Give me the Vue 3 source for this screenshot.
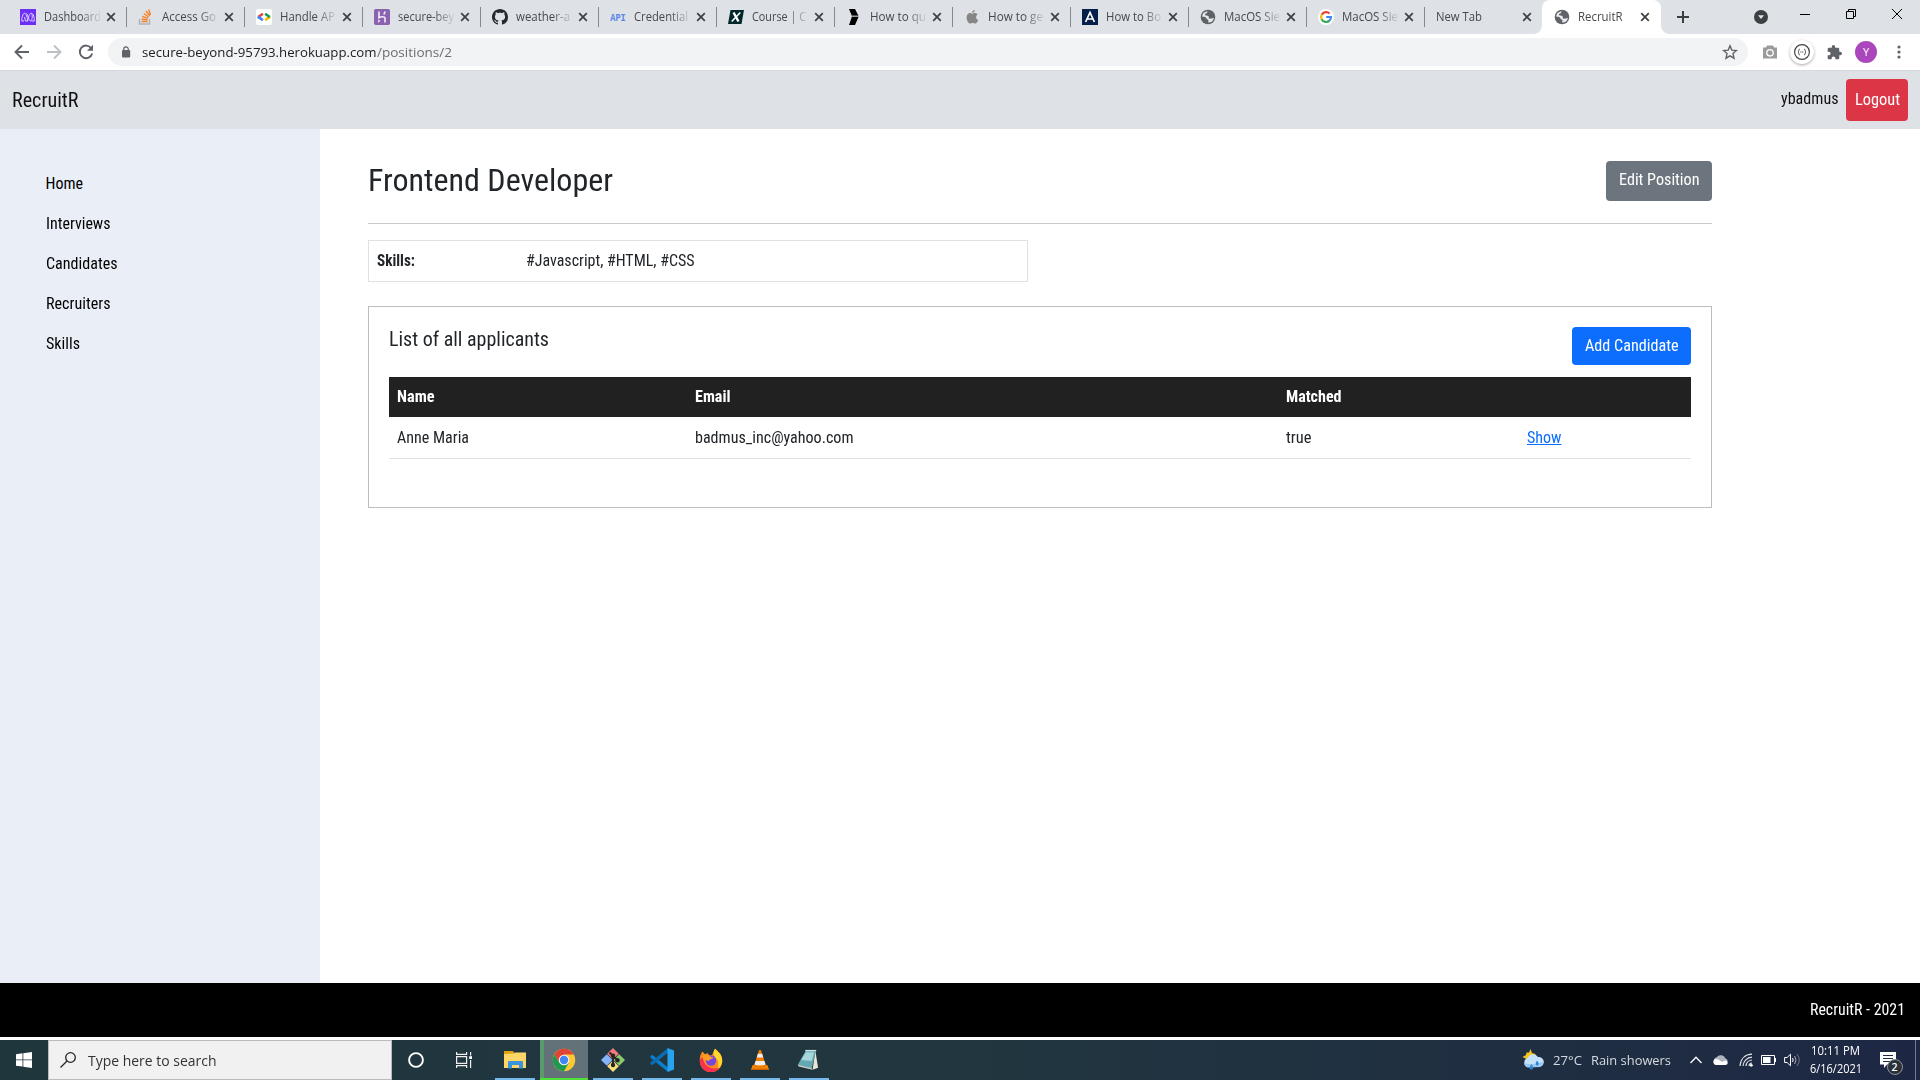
<script setup>
// Stretches or condenses a text run to a given advance width.
const vFit = {
  mounted(el, { value }) {
    const natural = el.getBoundingClientRect().width
    if (!natural) return
    el.style.transform = `scaleX(${value / natural})`
    el.style.marginRight = `${value - natural}px`
  },
}

const tabs = [
  { icon: 'amplify', title: 'Dashboard', width: 57 },
  { icon: 'stack', title: 'Access Go', width: 54 },
  { icon: 'google-dev', title: 'Handle AP', width: 55 },
  { icon: 'heroku', title: 'secure-bey', width: 56 },
  { icon: 'github', title: 'weather-a', width: 54 },
  { icon: 'api', title: 'Credential', width: 54 },
  { icon: 'course', title: 'Course | C', width: 54 },
  { icon: 'arrow', title: 'How to qu', width: 56 },
  { icon: 'apple', title: 'How to ge', width: 55 },
  { icon: 'letter', title: 'How to Bo', width: 55 },
  { icon: 'globe', title: 'MacOS Sie', width: 56 },
  { icon: 'google', title: 'MacOS Sie', width: 56 },
  { icon: null, title: 'New Tab', width: 46 },
  { icon: 'globe', title: 'RecruitR', width: 44.5, active: true },
]

const links = [
  { label: 'Home', width: 37.5 },
  { label: 'Interviews', width: 64.5 },
  { label: 'Candidates', width: 71.5 },
  { label: 'Recruiters', width: 64.5 },
  { label: 'Skills', width: 34 },
]

const apps = ['explorer', 'chrome', 'git', 'vscode', 'firefox', 'vlc', 'notepad']
</script>

<template>
  <div class="screen">
    <div class="tabstrip">
      <div v-for="(tab, i) in tabs" :key="i" class="tab" :class="{ active: tab.active, 'no-sep': i >= 12 }">
        <svg v-if="tab.icon" class="favicon" viewBox="0 0 16 16">
          <g v-if="tab.icon === 'amplify'">
            <path fill="#6b2ff5" d="M0 0h16v16H0z" />
            <path fill="none" stroke="#ded2ff" stroke-width="1" d="M4 12H1.800C1.500 9 3 4.200 4.500 4.200S7.500 9 7.800 12H5.500L4.500 8M6.300 4.200C8 4.500 8.500 12 10.500 12S13 4.200 11 4.200 8 12 6.800 12M11.500 4.200C13.500 4.500 14.500 9 14.300 12H11.500" />
          </g>
          <g v-else-if="tab.icon === 'stack'" fill="none">
            <path stroke="#b0b4b8" stroke-width="1.500" d="M1.500 10v5h10v-5" />
            <path stroke="#f48024" stroke-width="1.400" d="M3.500 12.500h6M3.600 10l6 .9M4.300 7.300l5.700 2M5.800 4.500l4.900 3.500M8 2l3.900 4.700M10.800.5l1.700 5.500" />
          </g>
          <g v-else-if="tab.icon === 'google-dev'">
            <rect width="16" height="16" rx="2" fill="#fff" />
            <path fill="none" stroke="#ea4335" stroke-width="2.600" d="M6.900 4.800L2.300 8" />
            <path fill="none" stroke="#4285f4" stroke-width="2.600" d="M1.700 7.600l5.200 3.500" />
            <path fill="none" stroke="#fbbc05" stroke-width="2.600" d="M14.300 7.600l-5.200 3.500" />
            <path fill="none" stroke="#0f9d58" stroke-width="2.600" d="M9.100 4.800L13.700 8" />
          </g>
          <g v-else-if="tab.icon === 'heroku'">
            <rect width="16" height="16" rx="1.800" fill="#8a63b0" />
            <path fill="none" stroke="#f3ecfa" stroke-width="1.600" d="M5 2.500v6.300c2-1 6-1.800 6 .6v4.100M11 2.500c0 1.200-.6 2-1.300 2.900" />
            <path fill="#f3ecfa" d="M4.200 10.300l2.200 1.700-2.200 1.700z" />
          </g>
          <path v-else-if="tab.icon === 'github'" fill="#24292e" d="M8 0C3.580 0 0 3.580 0 8c0 3.540 2.290 6.530 5.470 7.590.4.070.55-.17.55-.38 0-.19-.01-.82-.01-1.490-2.010.37-2.530-.49-2.690-.94-.09-.23-.48-.94-.82-1.130-.28-.15-.68-.52-.01-.53.63-.01 1.080.58 1.230.82.72 1.210 1.870.87 2.330.66.07-.52.28-.87.51-1.070-1.780-.2-3.640-.89-3.640-3.950 0-.87.31-1.590.82-2.150-.08-.2-.36-1.020.08-2.120 0 0 .67-.21 2.200.82.64-.18 1.320-.27 2-.27s1.360.09 2 .27c1.530-1.040 2.200-.82 2.200-.82.44 1.100.16 1.920.08 2.120.51.56.82 1.270.82 2.150 0 3.070-1.870 3.750-3.650 3.950.29.25.54.73.54 1.480 0 1.070-.01 1.930-.01 2.200 0 .21.15.46.55.38A8.010 8.010 0 0016 8c0-4.420-3.580-8-8-8z" />
          <text v-else-if="tab.icon === 'api'" x=".2" y="11.800" textLength="15.600" lengthAdjust="spacingAndGlyphs" font-family="'Liberation Mono', monospace" font-weight="700" font-size="11" fill="#5b87e8">API</text>
          <g v-else-if="tab.icon === 'course'">
            <path fill="#02262c" d="M2.500 1H16l-2.500 14H0z" />
            <path fill="none" stroke="#fff" stroke-width="2.400" d="M5.500 3.500l5 9" />
            <path fill="none" stroke="#fff" stroke-width="1.600" d="M12.300 3.500l-8.600 9" />
          </g>
          <g v-else-if="tab.icon === 'arrow'">
            <path fill="#000" d="M3 0h6l3.500 6.700H5.800zM5.800 8h6.700L9 16H3z" />
            <path fill="#999" d="M5.300 6.700h7.200V8H5.800z" />
          </g>
          <path v-else-if="tab.icon === 'apple'" fill="#868686" d="M10.800 1c.1 1.500-1.200 3-2.700 3C8 2.500 9.300 1.200 10.800 1zM8.300 4.800c.6 0 1.300-.8 2.600-.8 1.200 0 2.200.6 2.800 1.500-2.300 1.300-2 4.600.5 5.500-.6 1.700-1.800 3.600-3 3.600-.9 0-1.300-.6-2.500-.6s-1.600.6-2.500.6C4.500 14.600 2.600 11.500 2.600 8.500 2.600 5.500 4.400 4 6 4c1 0 1.700.8 2.300.8z" />
          <g v-else-if="tab.icon === 'letter'">
            <path fill="#04204a" d="M0 0h16v16H0z" />
            <path fill="none" stroke="#fff" stroke-width="1.700" d="M3.600 13L8 3.500l4.400 9.500M5 10h6" />
          </g>
          <g v-else-if="tab.icon === 'globe'">
            <circle cx="8" cy="8" r="7.300" fill="#5f6368" />
            <path fill="#e8eaed" d="M8.500 2.500c-2 .2-1 1.800-2.600 2.100-1.700.2-1 2 .4 1.900 1.900 0 2.700.9 2.500 2.300 0 1.500 1.700.9 2.700.8.9 0 1.500-.7 2.400-.7-.5 2.900-3 4.900-5.600 4.700-.2-1.300.5-1.700 0-2.700-.5-.8-2-.4-2-1.800 0-1.300-2-1.300-3.900-1.400-.3-3 2-5.600 6.100-5.200z" />
          </g>
          <g v-else-if="tab.icon === 'google'">
            <circle cx="8" cy="8" r="8" fill="#fff" />
            <g fill="none" stroke-width="2.200">
              <path stroke="#ea4335" d="M3.700 5.700A5 5 0 0111.600 4.500" />
              <path stroke="#fbbc05" d="M3.700 5.600a5 5 0 000 4.800" />
              <path stroke="#34a853" d="M3.600 10.300a5 5 0 007.900 1.300" />
              <path stroke="#4285f4" d="M8.200 8H13a5 5 0 01-1.600 3.700" />
            </g>
          </g>
        </svg>
        <div class="tab-title"><span v-fit="tab.width" class="fit">{{ tab.title }}</span></div>
        <svg class="tab-close" viewBox="0 0 10 10"><path d="M1.200 1.200l7.600 7.600M8.800 1.200L1.200 8.800" /></svg>
      </div>
      <svg class="new-tab" viewBox="0 0 12 12"><path d="M6 0v12M0 6h12" stroke="#3c4043" stroke-width="2" /></svg>
      <svg class="tab-search" viewBox="0 0 14 14"><circle cx="7" cy="7" r="7" fill="#3c4043" /><path fill="#dee1e6" d="M4 5.300h6L7 9z" /></svg>
      <svg class="win win-min" viewBox="0 0 10 10"><path d="M0 5.500h10" /></svg>
      <svg class="win" viewBox="0 0 10 10"><path d="M.5 2.500h7v7h-7zM2.500 2.500v-2h7v7h-2" /></svg>
      <svg class="win" viewBox="0 0 10 10"><path d="M0 0l10 10M10 0L0 10" /></svg>
    </div>

    <div class="toolbar">
      <svg class="nav" viewBox="0 0 16 16"><path d="M15 8H2M8 1.500L1.500 8 8 14.500" stroke="#5f6368" /></svg>
      <svg class="nav" viewBox="0 0 16 16"><path d="M1 8h13M8 1.500L14.500 8 8 14.500" stroke="#bdc1c6" /></svg>
      <svg class="nav" viewBox="0 0 16 16"><path d="M13.300 4.300A6.300 6.300 0 1014.200 9.500" stroke="#5f6368" /><path d="M15 .8v6H9z" fill="#5f6368" stroke="none" /></svg>
      <div class="omnibox">
        <svg class="lock" viewBox="0 0 10 12"><rect x="1" y="4" width="8.200" height="7.500" rx="1" fill="#5f6368" /><path d="M2.800 5V3.200a2.250 2.250 0 014.500 0V5" fill="none" stroke="#5f6368" stroke-width="1.200" /></svg>
        <div class="url"><span v-fit="234.500" class="fit host">secure-beyond-95793.herokuapp.com</span><span v-fit="75" class="fit path">/positions/2</span></div>
        <svg class="star" viewBox="0 0 16 16"><path fill="none" stroke="#5f6368" stroke-width="1.400" d="M8 1.800l1.800 4.300 4.700.4-3.500 3.100 1 4.600L8 11.800l-4 2.400 1-4.600-3.500-3.100 4.700-.4z" /></svg>
      </div>
      <svg class="ext camera" viewBox="0 0 16 14"><path fill="#9b9b9b" d="M5 .5h6l1 2h3v11H1v-11h3z" /><circle cx="8" cy="7.800" r="3.200" fill="none" stroke="#fff" stroke-width="1.300" /></svg>
      <div class="json"><svg viewBox="0 0 16 16"><g fill="none" stroke="#444"><circle cx="8" cy="8" r="7.400" stroke-width="1.200" /><path d="M5.800 5C4.500 5 5.200 7.500 4 8c1.200.5.5 3 1.800 3M10.200 5c1.300 0 .6 2.500 1.800 3-1.200.5-.5 3-1.800 3" /><path stroke-dasharray="1 .6" d="M6.300 8h3.500" /></g></svg></div>
      <svg class="ext puzzle" viewBox="1 1 22 22"><path fill="#5f6368" d="M20.500 11H19V7c0-1.100-.9-2-2-2h-4V3.500a2.500 2.500 0 00-5 0V5H4c-1.100 0-2 .9-2 2v3.800h1.500c1.500 0 2.700 1.200 2.700 2.700S5 16.200 3.500 16.200H2V20c0 1.100.9 2 2 2h3.800v-1.500c0-1.500 1.200-2.700 2.700-2.700s2.700 1.200 2.700 2.700V22H17c1.100 0 2-.9 2-2v-4h1.500a2.500 2.500 0 000-5z" /></svg>
      <div class="avatar">Y</div>
      <svg class="dots" viewBox="0 0 4 14"><g fill="#5f6368"><circle cx="2" cy="2" r="1.600" /><circle cx="2" cy="7" r="1.600" /><circle cx="2" cy="12" r="1.600" /></g></svg>
    </div>

    <header class="navbar">
      <div class="brand"><span v-fit="66.500" class="fit">RecruitR</span></div>
      <div class="user"><span v-fit="57.500" class="fit">ybadmus</span></div>
      <div class="btn logout"><span v-fit="45" class="fit">Logout</span></div>
    </header>

    <div class="body">
      <nav class="sidebar">
        <div v-for="link in links" :key="link.label" class="side-link"><span v-fit="link.width" class="fit">{{ link.label }}</span></div>
      </nav>
      <main class="content">
        <div class="title-row">
          <h1><span v-fit="245" class="fit">Frontend Developer</span></h1>
          <div class="btn edit"><span v-fit="80.500" class="fit">Edit Position</span></div>
        </div>
        <div class="skills">
          <div class="skills-label"><span v-fit="38" class="fit">Skills:</span></div>
          <div><span v-fit="168.500" class="fit">#Javascript, #HTML, #CSS</span></div>
        </div>
        <section class="card">
          <div class="card-head">
            <h2><span v-fit="160" class="fit">List of all applicants</span></h2>
            <div class="btn add"><span v-fit="93.500" class="fit">Add Candidate</span></div>
          </div>
          <div class="row head">
            <div><span v-fit="37.500" class="fit">Name</span></div>
            <div><span v-fit="35.500" class="fit">Email</span></div>
            <div><span v-fit="55.500" class="fit">Matched</span></div>
            <div></div>
          </div>
          <div class="row">
            <div><span v-fit="72" class="fit">Anne Maria</span></div>
            <div><span v-fit="158.500" class="fit">badmus_inc@yahoo.com</span></div>
            <div><span v-fit="25.500" class="fit">true</span></div>
            <div><span v-fit="34.500" class="fit show">Show</span></div>
          </div>
        </section>
      </main>
    </div>

    <footer class="footer"><span v-fit="95" class="fit">RecruitR - 2021</span></footer>

    <div class="taskbar">
      <div class="start"><svg viewBox="0 0 16 16"><path fill="#fff" d="M0 2.200l6.500-.9v6.200H0zM7.300 1.200L16 0v7.500H7.300zM0 8.300h6.500v6.300L0 13.700zM7.300 8.300H16V16l-8.700-1.200z" /></svg></div>
      <div class="search">
        <svg viewBox="0 0 16 16"><circle cx="10.500" cy="5.500" r="4.800" fill="none" stroke="#222" stroke-width="1.300" /><path d="M7 9L.5 15.500" stroke="#222" stroke-width="1.300" /></svg>
        <span v-fit="128.500" class="fit">Type here to search</span>
      </div>
      <div class="sys"><svg viewBox="0 0 16 16"><circle cx="8" cy="8" r="6.900" fill="none" stroke="#fff" stroke-width="1.900" /></svg></div>
      <div class="sys"><svg viewBox="0 0 16 16"><path fill="none" stroke="#f0f0f0" stroke-width="1.200" d="M.6 0v2.400h10V0M.6 16v-2.400h10V16M.6 4.600h10v6.800H.6zM14.600 0v3.500M14.600 8v8" /><path fill="#fff" d="M13.200 4.200H16V7h-2.800z" /></svg></div>
      <div class="apps">
        <div v-for="app in apps" :key="app" class="app" :class="app">
          <svg viewBox="0 0 24 24">
            <g v-if="app === 'explorer'">
              <path fill="#e0a010" d="M1 3h9l1.500 2v4H1z" /><path fill="#fdd667" d="M1 6l10-.5L12 4.500h11V20H1z" />
              <path fill="#3a93dc" d="M5 20.500V14q0-1 1-1h13q1 0 1 1v6.500h-4V17H9v3.500z" />
            </g>
            <g v-else-if="app === 'chrome'">
              <circle cx="12" cy="12" r="11.200" fill="#fbc934" />
              <path fill="#e04436" d="M2.300 6.400A11.200 11.200 0 0121.700 6.400H12L7.200 14.800z" />
              <path fill="#1d9a50" d="M2.300 6.400A11.200 11.200 0 0012 23.200l4.800-8.400H7.200z" />
              <circle cx="12" cy="12" r="5.300" fill="#f4f4f4" /><circle cx="12" cy="12" r="4.200" fill="#4285f4" />
            </g>
            <g v-else-if="app === 'git'">
              <path fill="#f37a7a" d="M12 0l5.800 5.800L12 11.600 6.200 5.800z" /><path fill="#86b4f8" d="M5.800 6.200l5.800 5.800-5.800 5.800L0 12z" />
              <path fill="#8cc96a" d="M18.200 6.200L24 12l-5.800 5.800-5.800-5.800z" /><path fill="#fbe07a" d="M12 12.400l5.800 5.800L12 24l-5.800-5.800z" />
              <path fill="none" stroke="#252525" stroke-width="1.900" d="M8.500 4.500L12 8v9M12 8l4.500 4" /><g fill="#252525"><circle cx="12" cy="7.800" r="2.200" /><circle cx="12" cy="17" r="2.200" /><circle cx="16.500" cy="12.300" r="2.200" /></g>
            </g>
            <g v-else-if="app === 'vscode'">
              <path fill="#0a7fcf" d="M.5 8.300L2.300 6.700 18 19.500V24L.5 9.700z" /><path fill="#0b6cb5" d="M.5 15.700l1.800 1.600L18 4.500V0L.5 14.300z" />
              <path fill="#28a4ee" d="M17.500 0L24 2.600v18.800L17.500 24z" />
            </g>
            <g v-else-if="app === 'firefox'">
              <path fill="#ff8a1e" d="M3.500 3.500l2.500 2.700 2.500-1.200L10 7l3 0L16 .8C18 3 23.500 6 23.200 13A11.200 11.200 0 01.8 13C.6 9 1.500 6 3.500 3.500z" />
              <path fill="#ffd52e" d="M16 .8C18 3 23.500 6 23.200 13c0 3-2 7-5 8.500 2-5 1-9-1-11-3-3-3.500-6-1.200-9.700z" />
              <path fill="#f8314f" d="M.8 12c-.1 7 5 12.200 11.200 12.200 4 0 7-2 8.500-4.700C14 22 5 20 3.500 9z" /><circle cx="12" cy="12.500" r="5.200" fill="#7547db" />
              <path fill="#ff9d24" d="M3.500 8c3-2 5.500-1.500 8 .7l3 .8c-1 1.800-4.500 1.300-4.500 3.500-1 0-3-1.500-5.500-1z" />
            </g>
            <g v-else-if="app === 'vlc'">
              <path fill="#f28a0a" d="M4 17.500h16L22 23H2z" /><path fill="#ef7d00" d="M11 1h2l6 18.500q-7 2.500-14 0z" />
              <path fill="#eee" d="M9.700 5.200h4.600l1.300 4H8.400zM7.200 13h9.600l1.300 4q-6 2-12.200 0z" />
              <path fill="#c95d00" d="M2.500 21.500h19L22 23H2z" />
            </g>
            <g v-else>
              <path fill="#e9e4d8" d="M20 2l3 18.500-6 2z" /><path fill="#62a9b4" d="M9.500 2H20.500L16 21.500.8 17.500z" />
              <path fill="#a9d6dc" d="M9.800 3.500h9L16 13 4.500 12z" /><path stroke="#d6e4e6" stroke-width="1.400" d="M9 1.700h12" />
              <path fill="#d4d4cc" d="M.8 17.300L16 21l1 1.500L2 19z" />
            </g>
          </svg>
        </div>
      </div>
      <div class="tray">
        <svg class="weather" viewBox="0 0 22 22"><path fill="#f7c51e" d="M8.500 0l1.500 4 3.500 1-1 6-7 3-1-4L.5 8l3.500-2L4.500 3.500l2.500 0z" /><path fill="#c5e2fb" d="M6 18.500a5 5 0 01-.5-9.500A6 6 0 0116 8a5 5 0 011.500 10z" /><path fill="#9ac8f3" d="M5 18a5 5 0 01-3-4c5 2 13 1 19-1 0 3-1.500 4.500-4 5z" /><path fill="#2686dc" d="M9.500 15q-2.500 3.500-1.500 5 2 1.500 3-.5.500-2-1.500-4.500zM15 11.500q-2 3-1 4.500 1.500 1 2.500-.5.500-2-1.500-4z" /></svg>
        <span v-fit="29" class="fit temp">27°C</span>
        <span v-fit="80" class="fit rain">Rain showers</span>
        <svg class="chev" viewBox="0 0 12 8"><path fill="none" stroke="#fff" stroke-width="1.300" d="M.5 7L6 1.300 11.500 7" /></svg>
        <svg class="cloud" viewBox="0 0 16 12"><path fill="#aeb4bd" d="M2 8a4 4 0 013-5 5 5 0 018.500 1.500C16 5 16 8 15 9z" /><path fill="#fff" d="M3.500 11A3.300 3.300 0 013 5c2 0 4 .5 7 3l3-1.500c3 0 4 4.500 0 4.500z" /></svg>
        <svg class="wifi" viewBox="0 0 14 14"><g fill="none" stroke="#dfe3e8" stroke-width="1.200"><path d="M1 13C1.500 6 6 1.500 13 1.200M4 13c.3-5 4-8.500 9-8.800M7 13c.2-3 2.500-5.700 6-6M10 13q.2-2.800 3-3" /></g><circle cx="12.300" cy="12.300" r="1.400" fill="#fff" /></svg>
        <svg class="battery" viewBox="0 0 16 10"><path fill="none" stroke="#fff" d="M.5 .5h13v9H.5zM14.500 3v4" /><path fill="#fff" d="M2 2h7.500v6H2z" /></svg>
        <svg class="volume" viewBox="0 0 17 14"><path fill="none" stroke="#fff" d="M.6 4.500h2.500L6.500 1.200v11.600L3.100 9.500H.6z" /><path fill="none" stroke="#fff" d="M8.500 5q1.400 2 0 4" /><path fill="none" stroke="#aab0bd" d="M10.600 3q2.800 4 0 8" /><path fill="none" stroke="#6d7588" d="M13 1q4.500 6 0 12" /></svg>
        <div class="clock"><div><span v-fit="49" class="fit">10:11 PM</span></div><div><span v-fit="52" class="fit">6/16/2021</span></div></div>
        <div class="notice">
          <svg viewBox="0 0 16 16"><path fill="#fff" d="M0 0h16v12.500H7L4 16v-3.500H0z" /><path stroke="#1f2a44" stroke-width="1.200" d="M3 3.500h10M3 6.500h10M3 9.500h7" /></svg>
          <span class="badge">2</span>
        </div>
        <div class="desktop"></div>
      </div>
    </div>
  </div>
</template>

<style>
body { margin: 0; overflow: hidden; }
</style>

<style scoped>
.screen, .screen * { box-sizing: border-box; }
.screen { width: 1920px; height: 1080px; display: flex; flex-direction: column; background: #fff; font-family: "Roboto Condensed", Roboto, sans-serif; font-stretch: condensed; font-size: 16px; color: #212529; overflow: hidden; }
svg { display: block; flex: none; }
.fit { display: inline-block; flex: none; white-space: nowrap; transform-origin: 0 50%; }

.tabstrip, .toolbar, .taskbar { font-family: "Open Sans", "Noto Sans", sans-serif; font-stretch: normal; }
.tabstrip { height: 34px; flex: none; display: flex; align-items: center; background: #dee1e6; padding-left: 8px; }
.tab { position: relative; width: 118px; height: 34px; flex: none; display: flex; align-items: center; padding-left: 12px; }
.tab::after { content: ""; position: absolute; right: -1px; top: 7px; width: 1px; height: 20px; background: #85888d; }
.tab.no-sep::after { display: none; }
.favicon { width: 16px; height: 16px; margin-right: 7.5px; overflow: visible; }
.tab-title { width: 55px; flex: 1 1 0; height: 20px; line-height: 19px; overflow: hidden; white-space: nowrap; font-size: 12px; color: #45484c; -webkit-mask-image: linear-gradient(90deg, #000 36px, transparent 58px); mask-image: linear-gradient(90deg, #000 36px, transparent 58px); }
.no-sep .tab-title { -webkit-mask-image: none; mask-image: none; }
.tab-close { width: 10px; height: 10px; margin: 0 10px 0 6px; fill: none; stroke: #3c4043; stroke-width: 1.7; }
.tab.active { width: 119px; background: #fff; border-radius: 8px 8px 0 0; }
.tab.active .tab-close { margin-right: 11px; }
.tab.active::before { content: ""; position: absolute; left: -8px; bottom: 0; width: 8px; height: 8px; background: radial-gradient(circle at 0 0, transparent 7.5px, #fff 8px); }
.tab.active::after { display: block; right: -8px; top: auto; bottom: 0; width: 8px; height: 8px; background: radial-gradient(circle at 100% 0, transparent 7.5px, #fff 8px); }
.new-tab { width: 12px; height: 12px; margin-left: 16px; }
.tab-search { width: 14px; height: 14px; margin: 0 32px 0 65px; }
.win { width: 10px; height: 10px; margin: -6px 36px 0 0; fill: none; stroke: #000; stroke-width: 1; }
.win:last-child { margin-right: 0; }

.toolbar { height: 36px; flex: none; display: flex; align-items: center; background: #fff; padding-left: 14px; }
.nav { width: 16px; height: 16px; margin-right: 16px; fill: none; stroke-width: 1.9; }
.omnibox { width: 1640px; height: 28px; border-radius: 14px; background: #f1f3f4; display: flex; align-items: center; margin-left: -2px; padding-left: 13px; }
.lock { width: 10px; height: 12px; margin-right: 11px; }
.url { flex: 1; font-size: 13.5px; line-height: 26px; color: #202124; white-space: nowrap; display: flex; }
.path { color: #6a6e73; }
.star { width: 16px; height: 16px; margin-right: 10px; }
.camera { width: 16px; height: 14px; margin-left: 14px; }
.json { width: 24px; height: 24px; border-radius: 50%; background: #fff; box-shadow: 0 1px 3px rgba(0,0,0,.35); margin-left: 12px; padding: 4px; flex: none; }
.json svg { width: 16px; height: 16px; }
.puzzle { width: 15px; height: 15px; margin-left: 13px; }
.avatar { width: 22px; height: 22px; border-radius: 50%; background: #aa47bc; color: #fff; font-size: 11px; line-height: 22px; text-align: center; margin-left: 13px; flex: none; }
.dots { width: 4px; height: 14px; margin-left: 20px; }

.navbar { height: 59px; flex: none; background: #dee2e6; box-shadow: inset 0 1px #d6d9dc; display: flex; align-items: flex-start; padding: 9px 12px 0; color: #111; }
.brand { flex: 1; font-size: 20px; line-height: 42px; }
.user { line-height: 39px; margin-right: 8px; }
.btn { display: flex; justify-content: center; border-radius: 4px; color: #fff; flex: none; }
.logout { width: 62px; height: 42px; background: #dc3545; line-height: 42px; }

.body { height: 854px; flex: none; display: flex; }
.sidebar { width: 320px; background: #eaeff7; padding: 35px 0 0 45.5px; color: #000; }
.side-link { height: 40px; line-height: 40px; }
.content { width: 1344px; margin-left: 48px; padding-top: 32px; }
.title-row { height: 63px; display: flex; justify-content: space-between; border-bottom: 1px solid #c8c9ca; }
h1 { margin: 0; font-size: 32px; font-weight: 400; line-height: 38px; }
.edit { width: 106px; height: 40px; background: #6c757d; line-height: 37px; }
.skills { width: 660px; height: 42px; margin-top: 16px; border: 1px solid #dee2e6; display: flex; line-height: 39px; padding-left: 7.5px; }
.skills-label { width: 149px; font-weight: 700; }
.card { height: 202px; margin-top: 24px; border: 1px solid #bcbdbe; padding: 20px; }
.card-head { height: 50px; display: flex; justify-content: space-between; }
h2 { margin: 0; font-size: 20px; font-weight: 400; line-height: 24px; }
.add { width: 119px; height: 38px; background: #0d6efd; line-height: 37px; }
.row { display: grid; grid-template-columns: 298px 591px 241.5px 1fr; height: 42px; padding-left: 7.5px; line-height: 41px; border-bottom: 1px solid #dee2e6; }
.row.head { height: 40px; line-height: 40px; background: #212121; color: #fff; font-weight: 700; border: 0; }
.show { color: #0d6efd; text-decoration: underline; }

.footer { height: 54px; flex: none; background: #000; color: #fff; display: flex; justify-content: flex-end; padding-right: 15.5px; line-height: 53px; }

.taskbar { height: 40px; margin-top: 3px; flex: none; display: flex; background: linear-gradient(90deg, #20363d 0%, #21363f 50%, #1f2d42 84%, #1d2744 100%); color: #fff; }
.start { width: 48px; padding: 12px 16px; }
.start svg, .sys svg { width: 16px; height: 16px; }
.search { width: 344px; height: 40px; background: #f1f1f1; border: 1px solid #b9babb; display: flex; align-items: center; padding-left: 11px; font-size: 15px; color: #333; }
.search svg { width: 16px; height: 16px; margin-right: 12px; }
.sys { width: 48px; padding: 12px 16px; }
.sys + .sys { width: 52px; }
.apps { display: flex; margin-left: 3px; }
.app { width: 40px; height: 40px; margin-right: 9px; border-bottom: 2px solid #76b9ed; display: flex; align-items: center; justify-content: center; padding-top: 2px; }
.app svg { width: 24px; height: 24px; }
.explorer { margin-right: 5px; }
.chrome { width: 48px; margin-right: 5px; background: linear-gradient(90deg, #5a9a6c 4px, #637279 4px); border-bottom-color: #4fe13a; }
.notepad svg { width: 22px; height: 22px; margin-right: 2px; }
.vlc svg { width: 22px; height: 24px; }
.tray { flex: 1; display: flex; align-items: center; justify-content: flex-end; font-size: 12.5px; }
.weather { width: 22px; height: 22px; margin-right: 9px; }
.temp { color: #d6dae0; }
.rain { color: #d6dae0; margin-left: 9px; }
.chev { width: 12px; height: 8px; margin: 0 10px 0 19px; }
.cloud { width: 16px; height: 12px; margin-right: 11px; }
.wifi { width: 14px; height: 14px; margin-right: 8px; }
.battery { width: 16px; height: 10px; margin-right: 7px; }
.volume { width: 17px; height: 14px; margin-right: 7.5px; }
.clock { width: 54px; font-size: 12px; line-height: 18px; text-align: center; display: flex; flex-direction: column; align-items: center; }
.clock div { display: flex; }
.notice { position: relative; width: 16px; height: 16px; margin-left: 17px; }
.notice svg { width: 16px; height: 16px; }
.badge { position: absolute; left: 7px; top: 7px; width: 16px; height: 16px; border-radius: 50%; background: #2b3138; border: 1px solid #8d9299; font-size: 10.5px; line-height: 14px; text-align: center; font-weight: 600; }
.desktop { width: 5px; height: 40px; margin-left: 19.5px; border-left: 1px solid #747d8c; }
</style>
